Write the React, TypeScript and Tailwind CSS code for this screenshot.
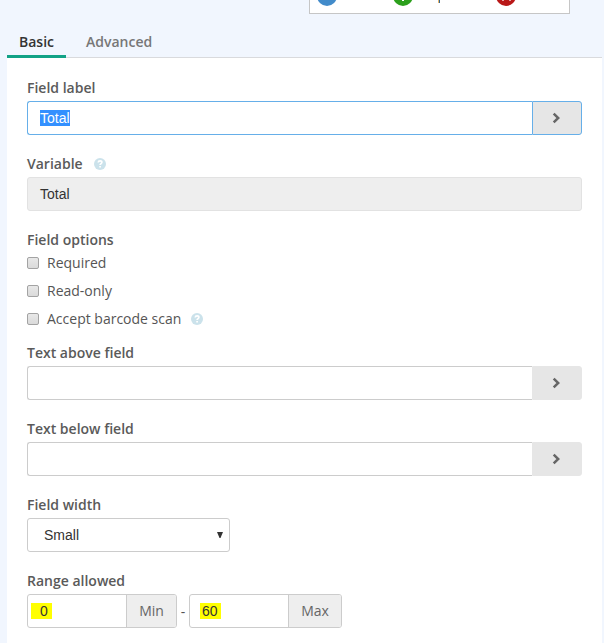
import React, { useState } from "react";

interface TextFieldProps {
  label: string;
  value?: string;
  focused?: boolean;
}

const HelpIcon: React.FC<{ className: string }> = ({ className }) => (
  <svg className={`h-3 w-3 shrink-0 ${className}`} viewBox="0 0 12 12">
    <circle cx="6" cy="6" r="6" fill="#cbe2eb" />
    <path
      d="M4.2 4.5C4.3 3.3 5.1 2.8 6.1 2.8c1.1 0 1.8.6 1.8 1.5C7.9 5.6 6.1 5.6 6.1 7.1M6.1 8.1v1.4"
      fill="none"
      stroke="#fff"
      strokeWidth="1.7"
    />
  </svg>
);

const Label: React.FC<{ text: string; help?: boolean }> = ({ text, help }) => (
  <div className="mb-[3px] flex h-5 items-center font-semibold leading-5 text-[#5a5a5a]">
    {text}
    {help && <HelpIcon className="ml-[11px]" />}
  </div>
);

const TextField: React.FC<TextFieldProps> = ({ label, value, focused }) => (
  <div className="mb-[19px]">
    <Label text={label} />
    <div className="flex h-[34px]">
      <div
        className={`flex flex-1 items-center rounded-l-[3px] border border-r-0 pl-3 font-['Liberation_Sans',sans-serif] ${
          focused ? "border-[#66afe9]" : "border-[#ccc]"
        }`}
      >
        {value && (
          <span className="h-4 bg-[#3390ff] leading-4 text-white">{value}</span>
        )}
      </div>
      <button
        type="button"
        className={`flex w-[50px] items-center justify-center rounded-r-[3px] border bg-[#e6e6e6] ${
          focused ? "border-[#66afe9]" : "border-[#e6e6e6]"
        }`}
      >
        <svg className="mr-[2px] h-3 w-2" viewBox="0 0 8 12">
          <path
            d="M1.7 1.7 6.2 6 1.7 10.3"
            fill="none"
            stroke="#666"
            strokeWidth="2.5"
          />
        </svg>
      </button>
    </div>
  </div>
);

const RangeInput: React.FC<{
  value: string;
  addon: string;
  markClass: string;
  addonClass: string;
}> = ({ value, addon, markClass, addonClass }) => (
  <div className="flex h-[34px] overflow-hidden rounded-[3px] border border-[#ccc]">
    <div className="flex w-[98px] items-center font-['Liberation_Sans',sans-serif] text-[#333]">
      <span className={`h-4 bg-[#ff0] leading-4 ${markClass}`}>{value}</span>
    </div>
    <div
      className={`flex items-center justify-center border-l border-[#ccc] bg-[#eee] pb-0.5 text-[#666] ${addonClass}`}
    >
      {addon}
    </div>
  </div>
);

const options = [
  { label: "Required" },
  { label: "Read-only" },
  { label: "Accept barcode scan", help: true },
];

const App: React.FC = () => {
  const [checked, setChecked] = useState<string[]>([]);

  const toggle = (label: string) => {
    setChecked((prev) =>
      prev.includes(label) ? prev.filter((l) => l !== label) : [...prev, label]
    );
  };

  return (
    <div className="flex h-[643px] w-[604px] flex-col overflow-hidden bg-[#f1f6fe] pl-[7px] pr-[2px] font-['Open_Sans',sans-serif] text-[14px] text-[#555]">
      {/* Bottom edge of the toolbar */}
      <div className="ml-[302px] h-[14px] w-[261px] shrink-0 border border-t-0 border-[#c6c6c6] bg-white">
        <svg className="block h-[13px] w-[259px]" viewBox="0 0 259 13">
          <circle cx="17" cy="-4" r="10" fill="#428bca" />
          <circle cx="93" cy="-4" r="10" fill="#2ca01c" />
          <path d="M93-8v9" stroke="#fff" strokeWidth="2" />
          <path d="M128.5 0v3" stroke="#e8b56a" />
          <path d="M129.5 0v3" stroke="#35668f" />
          <circle cx="196" cy="-4" r="10" fill="#b91818" />
          <path d="M192 .5h2M199 .5h2" stroke="#e3a3a3" />
        </svg>
      </div>

      <div className="flex h-11 shrink-0 border-b border-[#d9dadd] font-semibold">
        <div className="-mb-px flex w-[59px] items-end justify-center border-b-[3px] border-[#12a286] pb-[3px] leading-5 text-[#333]">
          Basic
        </div>
        <div className="flex items-end pb-[5px] pl-5 leading-5 text-[#777]">
          Advanced
        </div>
      </div>

      <div className="flex-1 bg-white px-5 pt-5">
        <TextField label="Field label" value="Total" focused />

        <div className="mb-[19px]">
          <Label text="Variable" help />
          <div className="flex h-[34px] items-center rounded-[3px] border border-[#e2e2e2] bg-[#eee] pl-3 font-['Liberation_Sans',sans-serif] text-[#333]">
            Total
          </div>
        </div>

        <Label text="Field options" />
        <div className="mb-[14px] flex flex-col gap-2">
          {options.map((option) => (
            <label key={option.label} className="flex h-5 items-center leading-5">
              <input
                type="checkbox"
                checked={checked.includes(option.label)}
                onChange={() => toggle(option.label)}
                className="mr-2 h-3 w-3 appearance-none rounded-[2px] border border-[#a3a3a3] bg-linear-to-b from-[#e8e8e8] to-[#dadada] checked:bg-[#428bca]"
              />
              {option.label}
              {option.help && <HelpIcon className="ml-[10px]" />}
            </label>
          ))}
        </div>

        <TextField label="Text above field" />
        <TextField label="Text below field" />

        <div className="mb-[19px]">
          <Label text="Field width" />
          <div className="flex h-[34px] w-[203px] items-center justify-between rounded-[3px] border border-[#ccc] pl-4 pr-1.5 font-['Liberation_Sans',sans-serif] text-[#333]">
            Small
            <svg className="h-[6px] w-[6px]" viewBox="0 0 6 6">
              <path d="M0 0h6L3.5 6h-1z" fill="#333" />
            </svg>
          </div>
        </div>

        <Label text="Range allowed" />
        <div className="flex items-center">
          <RangeInput
            value="0"
            addon="Min"
            markClass="ml-[3px] pl-[9px] pr-1"
            addonClass="w-[50px]"
          />
          <span className="w-3 text-center">-</span>
          <RangeInput
            value="60"
            addon="Max"
            markClass="ml-[10px] pl-0.5 pr-[3px]"
            addonClass="w-[53px]"
          />
        </div>
      </div>
    </div>
  );
};

export default App;
